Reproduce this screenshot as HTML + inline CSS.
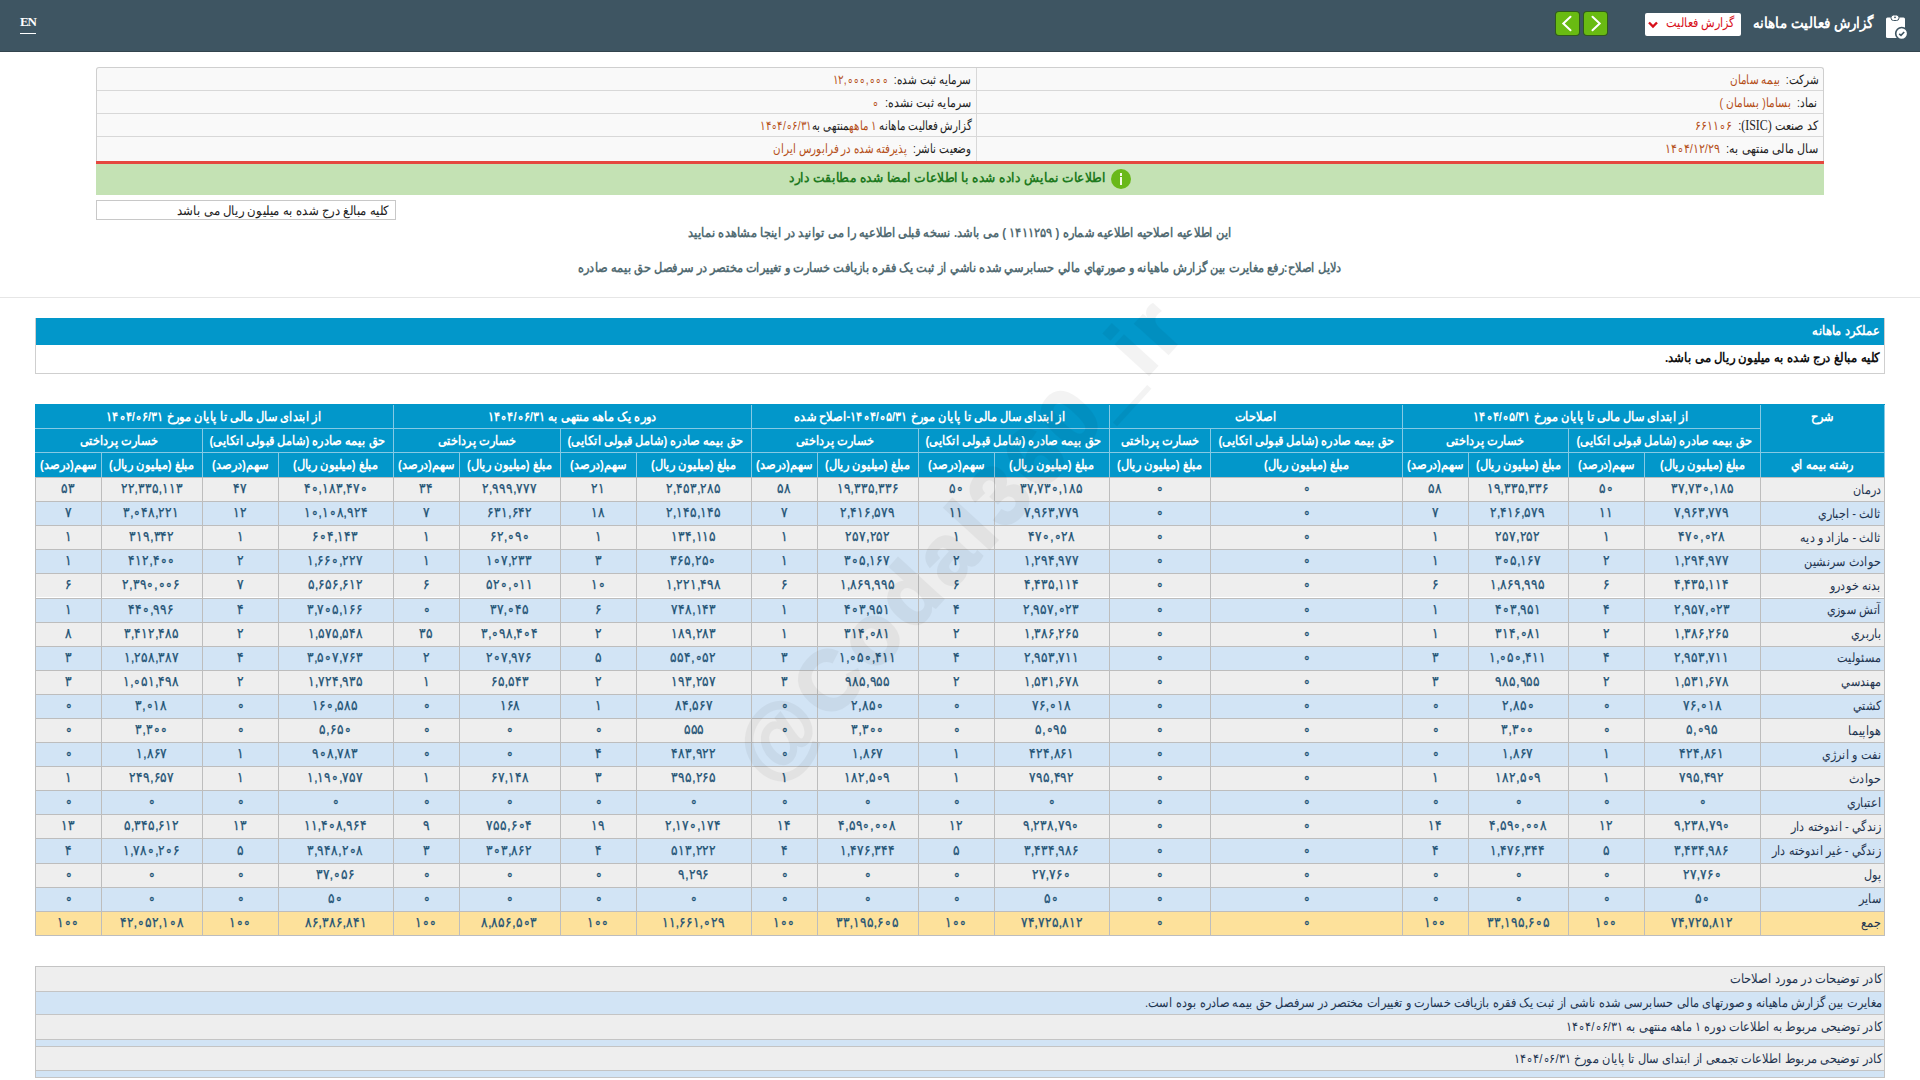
<!DOCTYPE html>
<html lang="fa" dir="rtl">
<head>
<meta charset="utf-8">
<style>
*{box-sizing:border-box;margin:0;padding:0}
html,body{width:1920px;height:1080px;overflow:hidden;background:#fff;font-family:"Liberation Sans",sans-serif;font-size:12px;color:#222}
.abs{position:absolute}
.sx{display:inline-block;white-space:nowrap}
#hdr{left:0;top:0;width:1920px;height:52px;background:#3e5562;border-bottom:1px solid #33444d}
#en{left:20px;top:14px;color:#fff;font-family:"Liberation Serif",serif;font-size:13px;font-weight:bold;direction:ltr;line-height:16px;letter-spacing:-1.2px}
#en:after{content:"";position:absolute;left:0;width:16px;top:19px;height:1px;background:#fff}
#ttl{left:1753px;top:13px;width:120px;height:20px;color:#fff;font-size:15px;font-weight:bold;white-space:nowrap;line-height:20px}
#ttl .sx{transform-origin:100% 50%;position:absolute;right:0}
#dd{left:1645px;top:13px;width:96px;height:23px;background:#fff;border-radius:2px}
#dd .t{position:absolute;right:6px;top:2px;color:#d8101a;font-size:13px;line-height:16px;transform:scaleX(.867);transform-origin:100% 50%;white-space:nowrap}
#dd svg{position:absolute;left:2px;top:8px}
.gbtn{top:12px;width:23px;height:23px;background:#69bb12;border-radius:3px;box-shadow:0 0 0 1px #2f5a1c}
.gbtn svg{position:absolute;left:0;top:0}
#info{left:96px;top:67px;width:1728px;height:94px;border:1px solid #cfcfcf;border-bottom:none;border-radius:3px 3px 0 0;background:#f9f9f9}
#info .row{height:23px;border-bottom:1px solid #d8d8d8;position:relative}
#info .row.last{height:24px;border-bottom:none}
#info .c{position:absolute;top:0;height:100%;white-space:nowrap;font-size:13px;padding-top:4px;transform-origin:100% 50%}
#info .r{right:5px}
#info .l{right:852px}
#info .div{position:absolute;left:879px;top:0;bottom:0;width:1px;background:#d8d8d8}
.v{color:#b5501a}
.ser{font-family:"Liberation Serif",serif;font-size:14px}
#red{left:96px;top:161px;width:1728px;height:3px;background:#e5473f}
#green{left:96px;top:164px;width:1728px;height:31px;background:#c4e2b4}
#green .t{position:absolute;right:718px;top:6px;color:#1f7a1f;font-size:13px;font-weight:bold;white-space:nowrap;transform:scaleX(.942);transform-origin:100% 50%}
#green .ic{position:absolute;left:1015px;top:5px;width:20px;height:20px;border-radius:50%;background:#69b81a}
#note{left:96px;top:200px;width:300px;height:20px;border:1px solid #c8c8c8;background:#fff;font-size:13px;padding-right:6px;padding-top:2px;white-space:nowrap}
.ctr{left:0;width:1920px;text-align:center;color:#536c73;font-weight:bold;font-size:13px;white-space:nowrap}
#hr{left:0;top:297px;width:1920px;height:1px;background:#e6e6e6}
#sec{left:35px;top:318px;width:1850px;height:56px;border:1px solid #cfcfcf;border-top:none}
#sechd{height:27px;background:#0297ca;color:#fff;font-weight:bold;font-size:13px;padding:5px 4px 0 0}
#secbd{font-weight:bold;font-size:13px;padding:5px 4px 0 0;color:#111}
#sec .sx{transform-origin:100% 50%}
.hbg{position:absolute;background:#0297ca}
.hc{position:absolute;color:#fff;font-weight:bold;font-size:13px;text-align:center;white-space:nowrap;display:flex;align-items:center;justify-content:center}
.hc .sx{transform:scaleX(.87)}
.ev{position:absolute;background:#eeeeee}
.od{position:absolute;background:#d2e4f5}
.tot{position:absolute;background:#fde19b}
.dc{position:absolute;color:#1d5274;font-size:13.5px;font-weight:normal;-webkit-text-stroke:.3px #1d5274;text-align:center;white-space:nowrap;display:flex;align-items:center;justify-content:center;padding-bottom:2px}
.dc .sx{transform:scaleX(.87);unicode-bidi:bidi-override;direction:ltr}
.dc.nm .sx{unicode-bidi:normal;direction:rtl}
.n{unicode-bidi:bidi-override;direction:ltr}
.dc.nm{justify-content:flex-start;padding-right:3px;color:#1f3550;font-weight:normal;font-size:13px;-webkit-text-stroke:0;padding-bottom:0}
.dc.nm .sx{transform:scaleX(.87);transform-origin:100% 50%}
#bot{left:35px;top:966px;width:1850px;height:112px;border:1px solid #c4c4c4;border-bottom:none}
#bot .br{position:relative;border-bottom:1px solid #c4c4c4;white-space:nowrap;padding-right:2px;font-size:13px;color:#1f3550}
#bot .sx{transform-origin:100% 50%}
#bot .g{background:#eeeeee}
#bot .b{background:#d2e4f5}
#wm{left:959px;top:539px;width:0;height:0}
#wm .t{position:absolute;left:-330px;top:-60px;width:660px;text-align:center;font-size:84px;line-height:120px;font-weight:bold;letter-spacing:5.2px;color:#000;-webkit-text-stroke:2.5px #000;opacity:.045;transform:rotate(-47.5deg);direction:ltr;white-space:nowrap}
</style>
</head>
<body>
<div id="hdr" class="abs"></div>
<div id="en" class="abs">EN</div>
<div id="ttl" class="abs"><span class="sx" style="transform:scaleX(.893)">گزارش فعالیت ماهانه</span></div>
<svg class="abs" style="left:1880px;top:10px" width="32" height="32" viewBox="0 0 32 32">
 <rect x="6" y="7.5" width="19" height="20.5" rx="1.5" fill="#fff"/>
 <rect x="11" y="5" width="8" height="5.5" rx="2.5" fill="#fff" stroke="#3e5562" stroke-width="1"/>
 <circle cx="15" cy="7.3" r="0.9" fill="#3e5562"/>
 <circle cx="21.7" cy="23.5" r="6" fill="#fff" stroke="#3e5562" stroke-width="1.6"/>
 <path d="M19.2 23.8 L21 25.4 L24.2 22" fill="none" stroke="#3e5562" stroke-width="1.6"/>
</svg>
<div id="dd" class="abs"><span class="t">گزارش فعالیت</span><svg width="12" height="8" viewBox="0 0 12 8"><path d="M2 1.5 L6 5.5 L10 1.5" fill="none" stroke="#d8101a" stroke-width="2.4"/></svg></div>
<div class="abs gbtn" style="left:1556px"><svg width="23" height="23" viewBox="0 0 23 23"><path d="M14.5 4.8 L7.3 11.5 L14.5 18.2" fill="none" stroke="#fff" stroke-width="2" stroke-linecap="round"/></svg></div>
<div class="abs gbtn" style="left:1584px"><svg width="23" height="23" viewBox="0 0 23 23"><path d="M8.5 4.8 L15.7 11.5 L8.5 18.2" fill="none" stroke="#fff" stroke-width="2" stroke-linecap="round"/></svg></div>

<div id="info" class="abs">
 <div class="div"></div>
 <div class="row"><span class="c r" style="transform:scaleX(.801)">شرکت:&nbsp; <span class="v">بیمه سامان</span></span><span class="c l" style="transform:scaleX(.799)">سرمایه ثبت شده:&nbsp; <span class="v"><span class="n">۱۲,∘∘∘,∘∘∘</span></span></span></div>
 <div class="row"><span class="c r" style="transform:scaleX(.816)">نماد:&nbsp; <span class="v">بساما( بسامان )</span></span><span class="c l" style="transform:scaleX(.846)">سرمایه ثبت نشده:&nbsp; <span class="v"><span class="n">∘</span></span></span></div>
 <div class="row"><span class="c r" style="transform:scaleX(.851)">کد صنعت <span class="ser">(ISIC)</span>:&nbsp; <span class="v"><span class="n">۶۶۱۱∘۶</span></span></span><span class="c l" style="transform:scaleX(.789)">گزارش فعالیت ماهانه <span class="v"><span class="n">۱</span> ماهه</span>منتهی به<span class="v"><span class="n">۱۴∘۴/∘۶/۳۱</span></span></span></div>
 <div class="row last"><span class="c r" style="transform:scaleX(.855)">سال مالی منتهی به:&nbsp; <span class="v"><span class="n">۱۴∘۴/۱۲/۲۹</span></span></span><span class="c l" style="transform:scaleX(.792)">وضعیت ناشر:&nbsp; <span class="v">پذیرفته شده در فرابورس ایران</span></span></div>
</div>
<div id="red" class="abs"></div>
<div id="green" class="abs"><div class="ic"><span style="position:absolute;left:9px;top:8px;width:2px;height:8px;background:#f4fbe8"></span><span style="position:absolute;left:9px;top:4px;width:2px;height:3px;background:#f4fbe8"></span></div><span class="t">اطلاعات نمایش داده شده با اطلاعات امضا شده مطابقت دارد</span></div>
<div id="note" class="abs"><span class="sx" style="transform:scaleX(.902);transform-origin:100% 50%">کلیه مبالغ درج شده به میلیون ریال می باشد</span></div>
<div class="abs ctr" style="top:225px"><span class="sx" style="transform:scaleX(.880)">این اطلاعیه اصلاحیه اطلاعیه شماره ( <span class="n">۱۴۱۱۲۵۹</span> ) می باشد. نسخه قبلی اطلاعیه را می توانید در اینجا مشاهده نمایید</span></div>
<div class="abs ctr" style="top:260px"><span class="sx" style="transform:scaleX(.877)">دلایل اصلاح:رفع مغایرت بین گزارش ماهیانه و صورتهاي مالي حسابرسي شده ناشي از ثبت یک فقره بازیافت خسارت و تغییرات مختصر در سرفصل حق بیمه صادره</span></div>
<div id="hr" class="abs"></div>
<div id="sec" class="abs"><div id="sechd"><span class="sx" style="transform:scaleX(.881)">عملکرد ماهانه</span></div><div id="secbd"><span class="sx" style="transform:scaleX(.901)">کلیه مبالغ درج شده به میلیون ریال می باشد.</span></div></div>
<div class="hbg" style="left:35px;top:404px;width:1850px;height:73px"></div>
<div class="ev" style="left:35px;top:477.0px;width:1850px;height:24.10px"></div>
<div class="od" style="left:35px;top:501.1px;width:1850px;height:24.10px"></div>
<div class="ev" style="left:35px;top:525.2px;width:1850px;height:24.10px"></div>
<div class="od" style="left:35px;top:549.3px;width:1850px;height:24.10px"></div>
<div class="ev" style="left:35px;top:573.4px;width:1850px;height:24.10px"></div>
<div class="od" style="left:35px;top:597.5px;width:1850px;height:24.10px"></div>
<div class="ev" style="left:35px;top:621.6px;width:1850px;height:24.10px"></div>
<div class="od" style="left:35px;top:645.7px;width:1850px;height:24.10px"></div>
<div class="ev" style="left:35px;top:669.8px;width:1850px;height:24.10px"></div>
<div class="od" style="left:35px;top:693.9px;width:1850px;height:24.10px"></div>
<div class="ev" style="left:35px;top:718.0px;width:1850px;height:24.10px"></div>
<div class="od" style="left:35px;top:742.1px;width:1850px;height:24.10px"></div>
<div class="ev" style="left:35px;top:766.2px;width:1850px;height:24.10px"></div>
<div class="od" style="left:35px;top:790.3px;width:1850px;height:24.10px"></div>
<div class="ev" style="left:35px;top:814.4px;width:1850px;height:24.10px"></div>
<div class="od" style="left:35px;top:838.5px;width:1850px;height:24.10px"></div>
<div class="ev" style="left:35px;top:862.6px;width:1850px;height:24.10px"></div>
<div class="od" style="left:35px;top:886.7px;width:1850px;height:24.10px"></div>
<div class="tot" style="left:35px;top:910.8px;width:1850px;height:24.10px"></div>
<div class="hc" style="left:1760px;top:405px;width:124px;height:23.5px;"><span class="sx">شرح</span></div>
<div class="hc" style="left:1402px;top:405px;width:358px;height:23.5px;"><span class="sx">از ابتدای سال مالی تا پایان مورخ <span class="n">۱۴∘۴/∘۵/۳۱</span></span></div>
<div class="hc" style="left:1109px;top:405px;width:293px;height:23.5px;"><span class="sx">اصلاحات</span></div>
<div class="hc" style="left:751px;top:405px;width:358px;height:23.5px;"><span class="sx">از ابتدای سال مالی تا پایان مورخ <span class="n">۱۴∘۴/∘۵/۳۱</span>-اصلاح شده</span></div>
<div class="hc" style="left:393px;top:405px;width:358px;height:23.5px;"><span class="sx">دوره یک ماهه منتهی به <span class="n">۱۴∘۴/∘۶/۳۱</span></span></div>
<div class="hc" style="left:35px;top:405px;width:358px;height:23.5px;"><span class="sx">از ابتدای سال مالی تا پایان مورخ <span class="n">۱۴∘۴/∘۶/۳۱</span></span></div>
<div class="hc" style="left:1568px;top:428.5px;width:192px;height:24.0px;"><span class="sx">حق بیمه صادره (شامل قبولی اتکایی)</span></div>
<div class="hc" style="left:1402px;top:428.5px;width:166px;height:24.0px;"><span class="sx">خسارت پرداختی</span></div>
<div class="hc" style="left:1210px;top:428.5px;width:192px;height:24.0px;"><span class="sx">حق بیمه صادره (شامل قبولی اتکایی)</span></div>
<div class="hc" style="left:1109px;top:428.5px;width:101px;height:24.0px;"><span class="sx">خسارت پرداختی</span></div>
<div class="hc" style="left:918px;top:428.5px;width:191px;height:24.0px;"><span class="sx">حق بیمه صادره (شامل قبولی اتکایی)</span></div>
<div class="hc" style="left:751px;top:428.5px;width:167px;height:24.0px;"><span class="sx">خسارت پرداختی</span></div>
<div class="hc" style="left:560px;top:428.5px;width:191px;height:24.0px;"><span class="sx">حق بیمه صادره (شامل قبولی اتکایی)</span></div>
<div class="hc" style="left:393px;top:428.5px;width:167px;height:24.0px;"><span class="sx">خسارت پرداختی</span></div>
<div class="hc" style="left:202px;top:428.5px;width:191px;height:24.0px;"><span class="sx">حق بیمه صادره (شامل قبولی اتکایی)</span></div>
<div class="hc" style="left:35px;top:428.5px;width:167px;height:24.0px;"><span class="sx">خسارت پرداختی</span></div>
<div class="hc" style="left:1760px;top:452.5px;width:124px;height:24.5px;"><span class="sx">رشته بیمه اي</span></div>
<div class="hc" style="left:1644px;top:452.5px;width:116px;height:24.5px;"><span class="sx">مبلغ (میلیون ریال)</span></div>
<div class="hc" style="left:1568px;top:452.5px;width:76px;height:24.5px;"><span class="sx">سهم(درصد)</span></div>
<div class="hc" style="left:1468px;top:452.5px;width:100px;height:24.5px;"><span class="sx">مبلغ (میلیون ریال)</span></div>
<div class="hc" style="left:1402px;top:452.5px;width:66px;height:24.5px;"><span class="sx">سهم(درصد)</span></div>
<div class="hc" style="left:1210px;top:452.5px;width:192px;height:24.5px;"><span class="sx">مبلغ (میلیون ریال)</span></div>
<div class="hc" style="left:1109px;top:452.5px;width:101px;height:24.5px;"><span class="sx">مبلغ (میلیون ریال)</span></div>
<div class="hc" style="left:994px;top:452.5px;width:115px;height:24.5px;"><span class="sx">مبلغ (میلیون ریال)</span></div>
<div class="hc" style="left:918px;top:452.5px;width:76px;height:24.5px;"><span class="sx">سهم(درصد)</span></div>
<div class="hc" style="left:817px;top:452.5px;width:101px;height:24.5px;"><span class="sx">مبلغ (میلیون ریال)</span></div>
<div class="hc" style="left:751px;top:452.5px;width:66px;height:24.5px;"><span class="sx">سهم(درصد)</span></div>
<div class="hc" style="left:636px;top:452.5px;width:115px;height:24.5px;"><span class="sx">مبلغ (میلیون ریال)</span></div>
<div class="hc" style="left:560px;top:452.5px;width:76px;height:24.5px;"><span class="sx">سهم(درصد)</span></div>
<div class="hc" style="left:459px;top:452.5px;width:101px;height:24.5px;"><span class="sx">مبلغ (میلیون ریال)</span></div>
<div class="hc" style="left:393px;top:452.5px;width:66px;height:24.5px;"><span class="sx">سهم(درصد)</span></div>
<div class="hc" style="left:278px;top:452.5px;width:115px;height:24.5px;"><span class="sx">مبلغ (میلیون ریال)</span></div>
<div class="hc" style="left:202px;top:452.5px;width:76px;height:24.5px;"><span class="sx">سهم(درصد)</span></div>
<div class="hc" style="left:101px;top:452.5px;width:101px;height:24.5px;"><span class="sx">مبلغ (میلیون ریال)</span></div>
<div class="hc" style="left:35px;top:452.5px;width:66px;height:24.5px;"><span class="sx">سهم(درصد)</span></div>
<div class="dc nm" style="left:1760px;top:477.0px;width:124px;height:24.100000000000023px;"><span class="sx">درمان</span></div>
<div class="dc" style="left:1644px;top:477.0px;width:116px;height:24.100000000000023px;"><span class="sx">۳۷,۷۳∘,۱۸۵</span></div>
<div class="dc" style="left:1568px;top:477.0px;width:76px;height:24.100000000000023px;"><span class="sx">۵∘</span></div>
<div class="dc" style="left:1468px;top:477.0px;width:100px;height:24.100000000000023px;"><span class="sx">۱۹,۳۳۵,۳۳۶</span></div>
<div class="dc" style="left:1402px;top:477.0px;width:66px;height:24.100000000000023px;"><span class="sx">۵۸</span></div>
<div class="dc" style="left:1210px;top:477.0px;width:192px;height:24.100000000000023px;"><span class="sx">∘</span></div>
<div class="dc" style="left:1109px;top:477.0px;width:101px;height:24.100000000000023px;"><span class="sx">∘</span></div>
<div class="dc" style="left:994px;top:477.0px;width:115px;height:24.100000000000023px;"><span class="sx">۳۷,۷۳∘,۱۸۵</span></div>
<div class="dc" style="left:918px;top:477.0px;width:76px;height:24.100000000000023px;"><span class="sx">۵∘</span></div>
<div class="dc" style="left:817px;top:477.0px;width:101px;height:24.100000000000023px;"><span class="sx">۱۹,۳۳۵,۳۳۶</span></div>
<div class="dc" style="left:751px;top:477.0px;width:66px;height:24.100000000000023px;"><span class="sx">۵۸</span></div>
<div class="dc" style="left:636px;top:477.0px;width:115px;height:24.100000000000023px;"><span class="sx">۲,۴۵۳,۲۸۵</span></div>
<div class="dc" style="left:560px;top:477.0px;width:76px;height:24.100000000000023px;"><span class="sx">۲۱</span></div>
<div class="dc" style="left:459px;top:477.0px;width:101px;height:24.100000000000023px;"><span class="sx">۲,۹۹۹,۷۷۷</span></div>
<div class="dc" style="left:393px;top:477.0px;width:66px;height:24.100000000000023px;"><span class="sx">۳۴</span></div>
<div class="dc" style="left:278px;top:477.0px;width:115px;height:24.100000000000023px;"><span class="sx">۴∘,۱۸۳,۴۷∘</span></div>
<div class="dc" style="left:202px;top:477.0px;width:76px;height:24.100000000000023px;"><span class="sx">۴۷</span></div>
<div class="dc" style="left:101px;top:477.0px;width:101px;height:24.100000000000023px;"><span class="sx">۲۲,۳۳۵,۱۱۳</span></div>
<div class="dc" style="left:35px;top:477.0px;width:66px;height:24.100000000000023px;"><span class="sx">۵۳</span></div>
<div class="dc nm" style="left:1760px;top:501.1px;width:124px;height:24.100000000000023px;"><span class="sx">ثالث - اجباري</span></div>
<div class="dc" style="left:1644px;top:501.1px;width:116px;height:24.100000000000023px;"><span class="sx">۷,۹۶۳,۷۷۹</span></div>
<div class="dc" style="left:1568px;top:501.1px;width:76px;height:24.100000000000023px;"><span class="sx">۱۱</span></div>
<div class="dc" style="left:1468px;top:501.1px;width:100px;height:24.100000000000023px;"><span class="sx">۲,۴۱۶,۵۷۹</span></div>
<div class="dc" style="left:1402px;top:501.1px;width:66px;height:24.100000000000023px;"><span class="sx">۷</span></div>
<div class="dc" style="left:1210px;top:501.1px;width:192px;height:24.100000000000023px;"><span class="sx">∘</span></div>
<div class="dc" style="left:1109px;top:501.1px;width:101px;height:24.100000000000023px;"><span class="sx">∘</span></div>
<div class="dc" style="left:994px;top:501.1px;width:115px;height:24.100000000000023px;"><span class="sx">۷,۹۶۳,۷۷۹</span></div>
<div class="dc" style="left:918px;top:501.1px;width:76px;height:24.100000000000023px;"><span class="sx">۱۱</span></div>
<div class="dc" style="left:817px;top:501.1px;width:101px;height:24.100000000000023px;"><span class="sx">۲,۴۱۶,۵۷۹</span></div>
<div class="dc" style="left:751px;top:501.1px;width:66px;height:24.100000000000023px;"><span class="sx">۷</span></div>
<div class="dc" style="left:636px;top:501.1px;width:115px;height:24.100000000000023px;"><span class="sx">۲,۱۴۵,۱۴۵</span></div>
<div class="dc" style="left:560px;top:501.1px;width:76px;height:24.100000000000023px;"><span class="sx">۱۸</span></div>
<div class="dc" style="left:459px;top:501.1px;width:101px;height:24.100000000000023px;"><span class="sx">۶۳۱,۶۴۲</span></div>
<div class="dc" style="left:393px;top:501.1px;width:66px;height:24.100000000000023px;"><span class="sx">۷</span></div>
<div class="dc" style="left:278px;top:501.1px;width:115px;height:24.100000000000023px;"><span class="sx">۱∘,۱∘۸,۹۲۴</span></div>
<div class="dc" style="left:202px;top:501.1px;width:76px;height:24.100000000000023px;"><span class="sx">۱۲</span></div>
<div class="dc" style="left:101px;top:501.1px;width:101px;height:24.100000000000023px;"><span class="sx">۳,∘۴۸,۲۲۱</span></div>
<div class="dc" style="left:35px;top:501.1px;width:66px;height:24.100000000000023px;"><span class="sx">۷</span></div>
<div class="dc nm" style="left:1760px;top:525.2px;width:124px;height:24.09999999999991px;"><span class="sx">ثالث - مازاد و دیه</span></div>
<div class="dc" style="left:1644px;top:525.2px;width:116px;height:24.09999999999991px;"><span class="sx">۴۷∘,∘۲۸</span></div>
<div class="dc" style="left:1568px;top:525.2px;width:76px;height:24.09999999999991px;"><span class="sx">۱</span></div>
<div class="dc" style="left:1468px;top:525.2px;width:100px;height:24.09999999999991px;"><span class="sx">۲۵۷,۲۵۲</span></div>
<div class="dc" style="left:1402px;top:525.2px;width:66px;height:24.09999999999991px;"><span class="sx">۱</span></div>
<div class="dc" style="left:1210px;top:525.2px;width:192px;height:24.09999999999991px;"><span class="sx">∘</span></div>
<div class="dc" style="left:1109px;top:525.2px;width:101px;height:24.09999999999991px;"><span class="sx">∘</span></div>
<div class="dc" style="left:994px;top:525.2px;width:115px;height:24.09999999999991px;"><span class="sx">۴۷∘,∘۲۸</span></div>
<div class="dc" style="left:918px;top:525.2px;width:76px;height:24.09999999999991px;"><span class="sx">۱</span></div>
<div class="dc" style="left:817px;top:525.2px;width:101px;height:24.09999999999991px;"><span class="sx">۲۵۷,۲۵۲</span></div>
<div class="dc" style="left:751px;top:525.2px;width:66px;height:24.09999999999991px;"><span class="sx">۱</span></div>
<div class="dc" style="left:636px;top:525.2px;width:115px;height:24.09999999999991px;"><span class="sx">۱۳۴,۱۱۵</span></div>
<div class="dc" style="left:560px;top:525.2px;width:76px;height:24.09999999999991px;"><span class="sx">۱</span></div>
<div class="dc" style="left:459px;top:525.2px;width:101px;height:24.09999999999991px;"><span class="sx">۶۲,∘۹∘</span></div>
<div class="dc" style="left:393px;top:525.2px;width:66px;height:24.09999999999991px;"><span class="sx">۱</span></div>
<div class="dc" style="left:278px;top:525.2px;width:115px;height:24.09999999999991px;"><span class="sx">۶∘۴,۱۴۳</span></div>
<div class="dc" style="left:202px;top:525.2px;width:76px;height:24.09999999999991px;"><span class="sx">۱</span></div>
<div class="dc" style="left:101px;top:525.2px;width:101px;height:24.09999999999991px;"><span class="sx">۳۱۹,۳۴۲</span></div>
<div class="dc" style="left:35px;top:525.2px;width:66px;height:24.09999999999991px;"><span class="sx">۱</span></div>
<div class="dc nm" style="left:1760px;top:549.3px;width:124px;height:24.100000000000023px;"><span class="sx">حوادث سرنشین</span></div>
<div class="dc" style="left:1644px;top:549.3px;width:116px;height:24.100000000000023px;"><span class="sx">۱,۲۹۴,۹۷۷</span></div>
<div class="dc" style="left:1568px;top:549.3px;width:76px;height:24.100000000000023px;"><span class="sx">۲</span></div>
<div class="dc" style="left:1468px;top:549.3px;width:100px;height:24.100000000000023px;"><span class="sx">۳∘۵,۱۶۷</span></div>
<div class="dc" style="left:1402px;top:549.3px;width:66px;height:24.100000000000023px;"><span class="sx">۱</span></div>
<div class="dc" style="left:1210px;top:549.3px;width:192px;height:24.100000000000023px;"><span class="sx">∘</span></div>
<div class="dc" style="left:1109px;top:549.3px;width:101px;height:24.100000000000023px;"><span class="sx">∘</span></div>
<div class="dc" style="left:994px;top:549.3px;width:115px;height:24.100000000000023px;"><span class="sx">۱,۲۹۴,۹۷۷</span></div>
<div class="dc" style="left:918px;top:549.3px;width:76px;height:24.100000000000023px;"><span class="sx">۲</span></div>
<div class="dc" style="left:817px;top:549.3px;width:101px;height:24.100000000000023px;"><span class="sx">۳∘۵,۱۶۷</span></div>
<div class="dc" style="left:751px;top:549.3px;width:66px;height:24.100000000000023px;"><span class="sx">۱</span></div>
<div class="dc" style="left:636px;top:549.3px;width:115px;height:24.100000000000023px;"><span class="sx">۳۶۵,۲۵∘</span></div>
<div class="dc" style="left:560px;top:549.3px;width:76px;height:24.100000000000023px;"><span class="sx">۳</span></div>
<div class="dc" style="left:459px;top:549.3px;width:101px;height:24.100000000000023px;"><span class="sx">۱∘۷,۲۳۳</span></div>
<div class="dc" style="left:393px;top:549.3px;width:66px;height:24.100000000000023px;"><span class="sx">۱</span></div>
<div class="dc" style="left:278px;top:549.3px;width:115px;height:24.100000000000023px;"><span class="sx">۱,۶۶∘,۲۲۷</span></div>
<div class="dc" style="left:202px;top:549.3px;width:76px;height:24.100000000000023px;"><span class="sx">۲</span></div>
<div class="dc" style="left:101px;top:549.3px;width:101px;height:24.100000000000023px;"><span class="sx">۴۱۲,۴∘∘</span></div>
<div class="dc" style="left:35px;top:549.3px;width:66px;height:24.100000000000023px;"><span class="sx">۱</span></div>
<div class="dc nm" style="left:1760px;top:573.4px;width:124px;height:24.100000000000023px;"><span class="sx">بدنه خودرو</span></div>
<div class="dc" style="left:1644px;top:573.4px;width:116px;height:24.100000000000023px;"><span class="sx">۴,۴۳۵,۱۱۴</span></div>
<div class="dc" style="left:1568px;top:573.4px;width:76px;height:24.100000000000023px;"><span class="sx">۶</span></div>
<div class="dc" style="left:1468px;top:573.4px;width:100px;height:24.100000000000023px;"><span class="sx">۱,۸۶۹,۹۹۵</span></div>
<div class="dc" style="left:1402px;top:573.4px;width:66px;height:24.100000000000023px;"><span class="sx">۶</span></div>
<div class="dc" style="left:1210px;top:573.4px;width:192px;height:24.100000000000023px;"><span class="sx">∘</span></div>
<div class="dc" style="left:1109px;top:573.4px;width:101px;height:24.100000000000023px;"><span class="sx">∘</span></div>
<div class="dc" style="left:994px;top:573.4px;width:115px;height:24.100000000000023px;"><span class="sx">۴,۴۳۵,۱۱۴</span></div>
<div class="dc" style="left:918px;top:573.4px;width:76px;height:24.100000000000023px;"><span class="sx">۶</span></div>
<div class="dc" style="left:817px;top:573.4px;width:101px;height:24.100000000000023px;"><span class="sx">۱,۸۶۹,۹۹۵</span></div>
<div class="dc" style="left:751px;top:573.4px;width:66px;height:24.100000000000023px;"><span class="sx">۶</span></div>
<div class="dc" style="left:636px;top:573.4px;width:115px;height:24.100000000000023px;"><span class="sx">۱,۲۲۱,۴۹۸</span></div>
<div class="dc" style="left:560px;top:573.4px;width:76px;height:24.100000000000023px;"><span class="sx">۱∘</span></div>
<div class="dc" style="left:459px;top:573.4px;width:101px;height:24.100000000000023px;"><span class="sx">۵۲∘,∘۱۱</span></div>
<div class="dc" style="left:393px;top:573.4px;width:66px;height:24.100000000000023px;"><span class="sx">۶</span></div>
<div class="dc" style="left:278px;top:573.4px;width:115px;height:24.100000000000023px;"><span class="sx">۵,۶۵۶,۶۱۲</span></div>
<div class="dc" style="left:202px;top:573.4px;width:76px;height:24.100000000000023px;"><span class="sx">۷</span></div>
<div class="dc" style="left:101px;top:573.4px;width:101px;height:24.100000000000023px;"><span class="sx">۲,۳۹∘,∘∘۶</span></div>
<div class="dc" style="left:35px;top:573.4px;width:66px;height:24.100000000000023px;"><span class="sx">۶</span></div>
<div class="dc nm" style="left:1760px;top:597.5px;width:124px;height:24.100000000000023px;"><span class="sx">آتش سوزي</span></div>
<div class="dc" style="left:1644px;top:597.5px;width:116px;height:24.100000000000023px;"><span class="sx">۲,۹۵۷,∘۲۳</span></div>
<div class="dc" style="left:1568px;top:597.5px;width:76px;height:24.100000000000023px;"><span class="sx">۴</span></div>
<div class="dc" style="left:1468px;top:597.5px;width:100px;height:24.100000000000023px;"><span class="sx">۴∘۳,۹۵۱</span></div>
<div class="dc" style="left:1402px;top:597.5px;width:66px;height:24.100000000000023px;"><span class="sx">۱</span></div>
<div class="dc" style="left:1210px;top:597.5px;width:192px;height:24.100000000000023px;"><span class="sx">∘</span></div>
<div class="dc" style="left:1109px;top:597.5px;width:101px;height:24.100000000000023px;"><span class="sx">∘</span></div>
<div class="dc" style="left:994px;top:597.5px;width:115px;height:24.100000000000023px;"><span class="sx">۲,۹۵۷,∘۲۳</span></div>
<div class="dc" style="left:918px;top:597.5px;width:76px;height:24.100000000000023px;"><span class="sx">۴</span></div>
<div class="dc" style="left:817px;top:597.5px;width:101px;height:24.100000000000023px;"><span class="sx">۴∘۳,۹۵۱</span></div>
<div class="dc" style="left:751px;top:597.5px;width:66px;height:24.100000000000023px;"><span class="sx">۱</span></div>
<div class="dc" style="left:636px;top:597.5px;width:115px;height:24.100000000000023px;"><span class="sx">۷۴۸,۱۴۳</span></div>
<div class="dc" style="left:560px;top:597.5px;width:76px;height:24.100000000000023px;"><span class="sx">۶</span></div>
<div class="dc" style="left:459px;top:597.5px;width:101px;height:24.100000000000023px;"><span class="sx">۳۷,∘۴۵</span></div>
<div class="dc" style="left:393px;top:597.5px;width:66px;height:24.100000000000023px;"><span class="sx">∘</span></div>
<div class="dc" style="left:278px;top:597.5px;width:115px;height:24.100000000000023px;"><span class="sx">۳,۷∘۵,۱۶۶</span></div>
<div class="dc" style="left:202px;top:597.5px;width:76px;height:24.100000000000023px;"><span class="sx">۴</span></div>
<div class="dc" style="left:101px;top:597.5px;width:101px;height:24.100000000000023px;"><span class="sx">۴۴∘,۹۹۶</span></div>
<div class="dc" style="left:35px;top:597.5px;width:66px;height:24.100000000000023px;"><span class="sx">۱</span></div>
<div class="dc nm" style="left:1760px;top:621.6px;width:124px;height:24.100000000000023px;"><span class="sx">باربري</span></div>
<div class="dc" style="left:1644px;top:621.6px;width:116px;height:24.100000000000023px;"><span class="sx">۱,۳۸۶,۲۶۵</span></div>
<div class="dc" style="left:1568px;top:621.6px;width:76px;height:24.100000000000023px;"><span class="sx">۲</span></div>
<div class="dc" style="left:1468px;top:621.6px;width:100px;height:24.100000000000023px;"><span class="sx">۳۱۴,∘۸۱</span></div>
<div class="dc" style="left:1402px;top:621.6px;width:66px;height:24.100000000000023px;"><span class="sx">۱</span></div>
<div class="dc" style="left:1210px;top:621.6px;width:192px;height:24.100000000000023px;"><span class="sx">∘</span></div>
<div class="dc" style="left:1109px;top:621.6px;width:101px;height:24.100000000000023px;"><span class="sx">∘</span></div>
<div class="dc" style="left:994px;top:621.6px;width:115px;height:24.100000000000023px;"><span class="sx">۱,۳۸۶,۲۶۵</span></div>
<div class="dc" style="left:918px;top:621.6px;width:76px;height:24.100000000000023px;"><span class="sx">۲</span></div>
<div class="dc" style="left:817px;top:621.6px;width:101px;height:24.100000000000023px;"><span class="sx">۳۱۴,∘۸۱</span></div>
<div class="dc" style="left:751px;top:621.6px;width:66px;height:24.100000000000023px;"><span class="sx">۱</span></div>
<div class="dc" style="left:636px;top:621.6px;width:115px;height:24.100000000000023px;"><span class="sx">۱۸۹,۲۸۳</span></div>
<div class="dc" style="left:560px;top:621.6px;width:76px;height:24.100000000000023px;"><span class="sx">۲</span></div>
<div class="dc" style="left:459px;top:621.6px;width:101px;height:24.100000000000023px;"><span class="sx">۳,∘۹۸,۴∘۴</span></div>
<div class="dc" style="left:393px;top:621.6px;width:66px;height:24.100000000000023px;"><span class="sx">۳۵</span></div>
<div class="dc" style="left:278px;top:621.6px;width:115px;height:24.100000000000023px;"><span class="sx">۱,۵۷۵,۵۴۸</span></div>
<div class="dc" style="left:202px;top:621.6px;width:76px;height:24.100000000000023px;"><span class="sx">۲</span></div>
<div class="dc" style="left:101px;top:621.6px;width:101px;height:24.100000000000023px;"><span class="sx">۳,۴۱۲,۴۸۵</span></div>
<div class="dc" style="left:35px;top:621.6px;width:66px;height:24.100000000000023px;"><span class="sx">۸</span></div>
<div class="dc nm" style="left:1760px;top:645.7px;width:124px;height:24.09999999999991px;"><span class="sx">مسئولیت</span></div>
<div class="dc" style="left:1644px;top:645.7px;width:116px;height:24.09999999999991px;"><span class="sx">۲,۹۵۳,۷۱۱</span></div>
<div class="dc" style="left:1568px;top:645.7px;width:76px;height:24.09999999999991px;"><span class="sx">۴</span></div>
<div class="dc" style="left:1468px;top:645.7px;width:100px;height:24.09999999999991px;"><span class="sx">۱,∘۵∘,۴۱۱</span></div>
<div class="dc" style="left:1402px;top:645.7px;width:66px;height:24.09999999999991px;"><span class="sx">۳</span></div>
<div class="dc" style="left:1210px;top:645.7px;width:192px;height:24.09999999999991px;"><span class="sx">∘</span></div>
<div class="dc" style="left:1109px;top:645.7px;width:101px;height:24.09999999999991px;"><span class="sx">∘</span></div>
<div class="dc" style="left:994px;top:645.7px;width:115px;height:24.09999999999991px;"><span class="sx">۲,۹۵۳,۷۱۱</span></div>
<div class="dc" style="left:918px;top:645.7px;width:76px;height:24.09999999999991px;"><span class="sx">۴</span></div>
<div class="dc" style="left:817px;top:645.7px;width:101px;height:24.09999999999991px;"><span class="sx">۱,∘۵∘,۴۱۱</span></div>
<div class="dc" style="left:751px;top:645.7px;width:66px;height:24.09999999999991px;"><span class="sx">۳</span></div>
<div class="dc" style="left:636px;top:645.7px;width:115px;height:24.09999999999991px;"><span class="sx">۵۵۴,∘۵۲</span></div>
<div class="dc" style="left:560px;top:645.7px;width:76px;height:24.09999999999991px;"><span class="sx">۵</span></div>
<div class="dc" style="left:459px;top:645.7px;width:101px;height:24.09999999999991px;"><span class="sx">۲∘۷,۹۷۶</span></div>
<div class="dc" style="left:393px;top:645.7px;width:66px;height:24.09999999999991px;"><span class="sx">۲</span></div>
<div class="dc" style="left:278px;top:645.7px;width:115px;height:24.09999999999991px;"><span class="sx">۳,۵∘۷,۷۶۳</span></div>
<div class="dc" style="left:202px;top:645.7px;width:76px;height:24.09999999999991px;"><span class="sx">۴</span></div>
<div class="dc" style="left:101px;top:645.7px;width:101px;height:24.09999999999991px;"><span class="sx">۱,۲۵۸,۳۸۷</span></div>
<div class="dc" style="left:35px;top:645.7px;width:66px;height:24.09999999999991px;"><span class="sx">۳</span></div>
<div class="dc nm" style="left:1760px;top:669.8px;width:124px;height:24.100000000000023px;"><span class="sx">مهندسي</span></div>
<div class="dc" style="left:1644px;top:669.8px;width:116px;height:24.100000000000023px;"><span class="sx">۱,۵۳۱,۶۷۸</span></div>
<div class="dc" style="left:1568px;top:669.8px;width:76px;height:24.100000000000023px;"><span class="sx">۲</span></div>
<div class="dc" style="left:1468px;top:669.8px;width:100px;height:24.100000000000023px;"><span class="sx">۹۸۵,۹۵۵</span></div>
<div class="dc" style="left:1402px;top:669.8px;width:66px;height:24.100000000000023px;"><span class="sx">۳</span></div>
<div class="dc" style="left:1210px;top:669.8px;width:192px;height:24.100000000000023px;"><span class="sx">∘</span></div>
<div class="dc" style="left:1109px;top:669.8px;width:101px;height:24.100000000000023px;"><span class="sx">∘</span></div>
<div class="dc" style="left:994px;top:669.8px;width:115px;height:24.100000000000023px;"><span class="sx">۱,۵۳۱,۶۷۸</span></div>
<div class="dc" style="left:918px;top:669.8px;width:76px;height:24.100000000000023px;"><span class="sx">۲</span></div>
<div class="dc" style="left:817px;top:669.8px;width:101px;height:24.100000000000023px;"><span class="sx">۹۸۵,۹۵۵</span></div>
<div class="dc" style="left:751px;top:669.8px;width:66px;height:24.100000000000023px;"><span class="sx">۳</span></div>
<div class="dc" style="left:636px;top:669.8px;width:115px;height:24.100000000000023px;"><span class="sx">۱۹۳,۲۵۷</span></div>
<div class="dc" style="left:560px;top:669.8px;width:76px;height:24.100000000000023px;"><span class="sx">۲</span></div>
<div class="dc" style="left:459px;top:669.8px;width:101px;height:24.100000000000023px;"><span class="sx">۶۵,۵۴۳</span></div>
<div class="dc" style="left:393px;top:669.8px;width:66px;height:24.100000000000023px;"><span class="sx">۱</span></div>
<div class="dc" style="left:278px;top:669.8px;width:115px;height:24.100000000000023px;"><span class="sx">۱,۷۲۴,۹۳۵</span></div>
<div class="dc" style="left:202px;top:669.8px;width:76px;height:24.100000000000023px;"><span class="sx">۲</span></div>
<div class="dc" style="left:101px;top:669.8px;width:101px;height:24.100000000000023px;"><span class="sx">۱,∘۵۱,۴۹۸</span></div>
<div class="dc" style="left:35px;top:669.8px;width:66px;height:24.100000000000023px;"><span class="sx">۳</span></div>
<div class="dc nm" style="left:1760px;top:693.9px;width:124px;height:24.100000000000023px;"><span class="sx">کشتي</span></div>
<div class="dc" style="left:1644px;top:693.9px;width:116px;height:24.100000000000023px;"><span class="sx">۷۶,∘۱۸</span></div>
<div class="dc" style="left:1568px;top:693.9px;width:76px;height:24.100000000000023px;"><span class="sx">∘</span></div>
<div class="dc" style="left:1468px;top:693.9px;width:100px;height:24.100000000000023px;"><span class="sx">۲,۸۵∘</span></div>
<div class="dc" style="left:1402px;top:693.9px;width:66px;height:24.100000000000023px;"><span class="sx">∘</span></div>
<div class="dc" style="left:1210px;top:693.9px;width:192px;height:24.100000000000023px;"><span class="sx">∘</span></div>
<div class="dc" style="left:1109px;top:693.9px;width:101px;height:24.100000000000023px;"><span class="sx">∘</span></div>
<div class="dc" style="left:994px;top:693.9px;width:115px;height:24.100000000000023px;"><span class="sx">۷۶,∘۱۸</span></div>
<div class="dc" style="left:918px;top:693.9px;width:76px;height:24.100000000000023px;"><span class="sx">∘</span></div>
<div class="dc" style="left:817px;top:693.9px;width:101px;height:24.100000000000023px;"><span class="sx">۲,۸۵∘</span></div>
<div class="dc" style="left:751px;top:693.9px;width:66px;height:24.100000000000023px;"><span class="sx">∘</span></div>
<div class="dc" style="left:636px;top:693.9px;width:115px;height:24.100000000000023px;"><span class="sx">۸۴,۵۶۷</span></div>
<div class="dc" style="left:560px;top:693.9px;width:76px;height:24.100000000000023px;"><span class="sx">۱</span></div>
<div class="dc" style="left:459px;top:693.9px;width:101px;height:24.100000000000023px;"><span class="sx">۱۶۸</span></div>
<div class="dc" style="left:393px;top:693.9px;width:66px;height:24.100000000000023px;"><span class="sx">∘</span></div>
<div class="dc" style="left:278px;top:693.9px;width:115px;height:24.100000000000023px;"><span class="sx">۱۶∘,۵۸۵</span></div>
<div class="dc" style="left:202px;top:693.9px;width:76px;height:24.100000000000023px;"><span class="sx">∘</span></div>
<div class="dc" style="left:101px;top:693.9px;width:101px;height:24.100000000000023px;"><span class="sx">۳,∘۱۸</span></div>
<div class="dc" style="left:35px;top:693.9px;width:66px;height:24.100000000000023px;"><span class="sx">∘</span></div>
<div class="dc nm" style="left:1760px;top:718.0px;width:124px;height:24.100000000000023px;"><span class="sx">هواپیما</span></div>
<div class="dc" style="left:1644px;top:718.0px;width:116px;height:24.100000000000023px;"><span class="sx">۵,∘۹۵</span></div>
<div class="dc" style="left:1568px;top:718.0px;width:76px;height:24.100000000000023px;"><span class="sx">∘</span></div>
<div class="dc" style="left:1468px;top:718.0px;width:100px;height:24.100000000000023px;"><span class="sx">۳,۳∘∘</span></div>
<div class="dc" style="left:1402px;top:718.0px;width:66px;height:24.100000000000023px;"><span class="sx">∘</span></div>
<div class="dc" style="left:1210px;top:718.0px;width:192px;height:24.100000000000023px;"><span class="sx">∘</span></div>
<div class="dc" style="left:1109px;top:718.0px;width:101px;height:24.100000000000023px;"><span class="sx">∘</span></div>
<div class="dc" style="left:994px;top:718.0px;width:115px;height:24.100000000000023px;"><span class="sx">۵,∘۹۵</span></div>
<div class="dc" style="left:918px;top:718.0px;width:76px;height:24.100000000000023px;"><span class="sx">∘</span></div>
<div class="dc" style="left:817px;top:718.0px;width:101px;height:24.100000000000023px;"><span class="sx">۳,۳∘∘</span></div>
<div class="dc" style="left:751px;top:718.0px;width:66px;height:24.100000000000023px;"><span class="sx">∘</span></div>
<div class="dc" style="left:636px;top:718.0px;width:115px;height:24.100000000000023px;"><span class="sx">۵۵۵</span></div>
<div class="dc" style="left:560px;top:718.0px;width:76px;height:24.100000000000023px;"><span class="sx">∘</span></div>
<div class="dc" style="left:459px;top:718.0px;width:101px;height:24.100000000000023px;"><span class="sx">∘</span></div>
<div class="dc" style="left:393px;top:718.0px;width:66px;height:24.100000000000023px;"><span class="sx">∘</span></div>
<div class="dc" style="left:278px;top:718.0px;width:115px;height:24.100000000000023px;"><span class="sx">۵,۶۵∘</span></div>
<div class="dc" style="left:202px;top:718.0px;width:76px;height:24.100000000000023px;"><span class="sx">∘</span></div>
<div class="dc" style="left:101px;top:718.0px;width:101px;height:24.100000000000023px;"><span class="sx">۳,۳∘∘</span></div>
<div class="dc" style="left:35px;top:718.0px;width:66px;height:24.100000000000023px;"><span class="sx">∘</span></div>
<div class="dc nm" style="left:1760px;top:742.1px;width:124px;height:24.100000000000023px;"><span class="sx">نفت و انرژي</span></div>
<div class="dc" style="left:1644px;top:742.1px;width:116px;height:24.100000000000023px;"><span class="sx">۴۲۴,۸۶۱</span></div>
<div class="dc" style="left:1568px;top:742.1px;width:76px;height:24.100000000000023px;"><span class="sx">۱</span></div>
<div class="dc" style="left:1468px;top:742.1px;width:100px;height:24.100000000000023px;"><span class="sx">۱,۸۶۷</span></div>
<div class="dc" style="left:1402px;top:742.1px;width:66px;height:24.100000000000023px;"><span class="sx">∘</span></div>
<div class="dc" style="left:1210px;top:742.1px;width:192px;height:24.100000000000023px;"><span class="sx">∘</span></div>
<div class="dc" style="left:1109px;top:742.1px;width:101px;height:24.100000000000023px;"><span class="sx">∘</span></div>
<div class="dc" style="left:994px;top:742.1px;width:115px;height:24.100000000000023px;"><span class="sx">۴۲۴,۸۶۱</span></div>
<div class="dc" style="left:918px;top:742.1px;width:76px;height:24.100000000000023px;"><span class="sx">۱</span></div>
<div class="dc" style="left:817px;top:742.1px;width:101px;height:24.100000000000023px;"><span class="sx">۱,۸۶۷</span></div>
<div class="dc" style="left:751px;top:742.1px;width:66px;height:24.100000000000023px;"><span class="sx">∘</span></div>
<div class="dc" style="left:636px;top:742.1px;width:115px;height:24.100000000000023px;"><span class="sx">۴۸۳,۹۲۲</span></div>
<div class="dc" style="left:560px;top:742.1px;width:76px;height:24.100000000000023px;"><span class="sx">۴</span></div>
<div class="dc" style="left:459px;top:742.1px;width:101px;height:24.100000000000023px;"><span class="sx">∘</span></div>
<div class="dc" style="left:393px;top:742.1px;width:66px;height:24.100000000000023px;"><span class="sx">∘</span></div>
<div class="dc" style="left:278px;top:742.1px;width:115px;height:24.100000000000023px;"><span class="sx">۹∘۸,۷۸۳</span></div>
<div class="dc" style="left:202px;top:742.1px;width:76px;height:24.100000000000023px;"><span class="sx">۱</span></div>
<div class="dc" style="left:101px;top:742.1px;width:101px;height:24.100000000000023px;"><span class="sx">۱,۸۶۷</span></div>
<div class="dc" style="left:35px;top:742.1px;width:66px;height:24.100000000000023px;"><span class="sx">∘</span></div>
<div class="dc nm" style="left:1760px;top:766.2px;width:124px;height:24.09999999999991px;"><span class="sx">حوادث</span></div>
<div class="dc" style="left:1644px;top:766.2px;width:116px;height:24.09999999999991px;"><span class="sx">۷۹۵,۴۹۲</span></div>
<div class="dc" style="left:1568px;top:766.2px;width:76px;height:24.09999999999991px;"><span class="sx">۱</span></div>
<div class="dc" style="left:1468px;top:766.2px;width:100px;height:24.09999999999991px;"><span class="sx">۱۸۲,۵∘۹</span></div>
<div class="dc" style="left:1402px;top:766.2px;width:66px;height:24.09999999999991px;"><span class="sx">۱</span></div>
<div class="dc" style="left:1210px;top:766.2px;width:192px;height:24.09999999999991px;"><span class="sx">∘</span></div>
<div class="dc" style="left:1109px;top:766.2px;width:101px;height:24.09999999999991px;"><span class="sx">∘</span></div>
<div class="dc" style="left:994px;top:766.2px;width:115px;height:24.09999999999991px;"><span class="sx">۷۹۵,۴۹۲</span></div>
<div class="dc" style="left:918px;top:766.2px;width:76px;height:24.09999999999991px;"><span class="sx">۱</span></div>
<div class="dc" style="left:817px;top:766.2px;width:101px;height:24.09999999999991px;"><span class="sx">۱۸۲,۵∘۹</span></div>
<div class="dc" style="left:751px;top:766.2px;width:66px;height:24.09999999999991px;"><span class="sx">۱</span></div>
<div class="dc" style="left:636px;top:766.2px;width:115px;height:24.09999999999991px;"><span class="sx">۳۹۵,۲۶۵</span></div>
<div class="dc" style="left:560px;top:766.2px;width:76px;height:24.09999999999991px;"><span class="sx">۳</span></div>
<div class="dc" style="left:459px;top:766.2px;width:101px;height:24.09999999999991px;"><span class="sx">۶۷,۱۴۸</span></div>
<div class="dc" style="left:393px;top:766.2px;width:66px;height:24.09999999999991px;"><span class="sx">۱</span></div>
<div class="dc" style="left:278px;top:766.2px;width:115px;height:24.09999999999991px;"><span class="sx">۱,۱۹∘,۷۵۷</span></div>
<div class="dc" style="left:202px;top:766.2px;width:76px;height:24.09999999999991px;"><span class="sx">۱</span></div>
<div class="dc" style="left:101px;top:766.2px;width:101px;height:24.09999999999991px;"><span class="sx">۲۴۹,۶۵۷</span></div>
<div class="dc" style="left:35px;top:766.2px;width:66px;height:24.09999999999991px;"><span class="sx">۱</span></div>
<div class="dc nm" style="left:1760px;top:790.3px;width:124px;height:24.100000000000023px;"><span class="sx">اعتباري</span></div>
<div class="dc" style="left:1644px;top:790.3px;width:116px;height:24.100000000000023px;"><span class="sx">∘</span></div>
<div class="dc" style="left:1568px;top:790.3px;width:76px;height:24.100000000000023px;"><span class="sx">∘</span></div>
<div class="dc" style="left:1468px;top:790.3px;width:100px;height:24.100000000000023px;"><span class="sx">∘</span></div>
<div class="dc" style="left:1402px;top:790.3px;width:66px;height:24.100000000000023px;"><span class="sx">∘</span></div>
<div class="dc" style="left:1210px;top:790.3px;width:192px;height:24.100000000000023px;"><span class="sx">∘</span></div>
<div class="dc" style="left:1109px;top:790.3px;width:101px;height:24.100000000000023px;"><span class="sx">∘</span></div>
<div class="dc" style="left:994px;top:790.3px;width:115px;height:24.100000000000023px;"><span class="sx">∘</span></div>
<div class="dc" style="left:918px;top:790.3px;width:76px;height:24.100000000000023px;"><span class="sx">∘</span></div>
<div class="dc" style="left:817px;top:790.3px;width:101px;height:24.100000000000023px;"><span class="sx">∘</span></div>
<div class="dc" style="left:751px;top:790.3px;width:66px;height:24.100000000000023px;"><span class="sx">∘</span></div>
<div class="dc" style="left:636px;top:790.3px;width:115px;height:24.100000000000023px;"><span class="sx">∘</span></div>
<div class="dc" style="left:560px;top:790.3px;width:76px;height:24.100000000000023px;"><span class="sx">∘</span></div>
<div class="dc" style="left:459px;top:790.3px;width:101px;height:24.100000000000023px;"><span class="sx">∘</span></div>
<div class="dc" style="left:393px;top:790.3px;width:66px;height:24.100000000000023px;"><span class="sx">∘</span></div>
<div class="dc" style="left:278px;top:790.3px;width:115px;height:24.100000000000023px;"><span class="sx">∘</span></div>
<div class="dc" style="left:202px;top:790.3px;width:76px;height:24.100000000000023px;"><span class="sx">∘</span></div>
<div class="dc" style="left:101px;top:790.3px;width:101px;height:24.100000000000023px;"><span class="sx">∘</span></div>
<div class="dc" style="left:35px;top:790.3px;width:66px;height:24.100000000000023px;"><span class="sx">∘</span></div>
<div class="dc nm" style="left:1760px;top:814.4px;width:124px;height:24.100000000000023px;"><span class="sx">زندگي - اندوخته دار</span></div>
<div class="dc" style="left:1644px;top:814.4px;width:116px;height:24.100000000000023px;"><span class="sx">۹,۲۳۸,۷۹∘</span></div>
<div class="dc" style="left:1568px;top:814.4px;width:76px;height:24.100000000000023px;"><span class="sx">۱۲</span></div>
<div class="dc" style="left:1468px;top:814.4px;width:100px;height:24.100000000000023px;"><span class="sx">۴,۵۹∘,∘∘۸</span></div>
<div class="dc" style="left:1402px;top:814.4px;width:66px;height:24.100000000000023px;"><span class="sx">۱۴</span></div>
<div class="dc" style="left:1210px;top:814.4px;width:192px;height:24.100000000000023px;"><span class="sx">∘</span></div>
<div class="dc" style="left:1109px;top:814.4px;width:101px;height:24.100000000000023px;"><span class="sx">∘</span></div>
<div class="dc" style="left:994px;top:814.4px;width:115px;height:24.100000000000023px;"><span class="sx">۹,۲۳۸,۷۹∘</span></div>
<div class="dc" style="left:918px;top:814.4px;width:76px;height:24.100000000000023px;"><span class="sx">۱۲</span></div>
<div class="dc" style="left:817px;top:814.4px;width:101px;height:24.100000000000023px;"><span class="sx">۴,۵۹∘,∘∘۸</span></div>
<div class="dc" style="left:751px;top:814.4px;width:66px;height:24.100000000000023px;"><span class="sx">۱۴</span></div>
<div class="dc" style="left:636px;top:814.4px;width:115px;height:24.100000000000023px;"><span class="sx">۲,۱۷∘,۱۷۴</span></div>
<div class="dc" style="left:560px;top:814.4px;width:76px;height:24.100000000000023px;"><span class="sx">۱۹</span></div>
<div class="dc" style="left:459px;top:814.4px;width:101px;height:24.100000000000023px;"><span class="sx">۷۵۵,۶∘۴</span></div>
<div class="dc" style="left:393px;top:814.4px;width:66px;height:24.100000000000023px;"><span class="sx">۹</span></div>
<div class="dc" style="left:278px;top:814.4px;width:115px;height:24.100000000000023px;"><span class="sx">۱۱,۴∘۸,۹۶۴</span></div>
<div class="dc" style="left:202px;top:814.4px;width:76px;height:24.100000000000023px;"><span class="sx">۱۳</span></div>
<div class="dc" style="left:101px;top:814.4px;width:101px;height:24.100000000000023px;"><span class="sx">۵,۳۴۵,۶۱۲</span></div>
<div class="dc" style="left:35px;top:814.4px;width:66px;height:24.100000000000023px;"><span class="sx">۱۳</span></div>
<div class="dc nm" style="left:1760px;top:838.5px;width:124px;height:24.100000000000023px;"><span class="sx">زندگي - غیر اندوخته دار</span></div>
<div class="dc" style="left:1644px;top:838.5px;width:116px;height:24.100000000000023px;"><span class="sx">۳,۴۳۴,۹۸۶</span></div>
<div class="dc" style="left:1568px;top:838.5px;width:76px;height:24.100000000000023px;"><span class="sx">۵</span></div>
<div class="dc" style="left:1468px;top:838.5px;width:100px;height:24.100000000000023px;"><span class="sx">۱,۴۷۶,۳۴۴</span></div>
<div class="dc" style="left:1402px;top:838.5px;width:66px;height:24.100000000000023px;"><span class="sx">۴</span></div>
<div class="dc" style="left:1210px;top:838.5px;width:192px;height:24.100000000000023px;"><span class="sx">∘</span></div>
<div class="dc" style="left:1109px;top:838.5px;width:101px;height:24.100000000000023px;"><span class="sx">∘</span></div>
<div class="dc" style="left:994px;top:838.5px;width:115px;height:24.100000000000023px;"><span class="sx">۳,۴۳۴,۹۸۶</span></div>
<div class="dc" style="left:918px;top:838.5px;width:76px;height:24.100000000000023px;"><span class="sx">۵</span></div>
<div class="dc" style="left:817px;top:838.5px;width:101px;height:24.100000000000023px;"><span class="sx">۱,۴۷۶,۳۴۴</span></div>
<div class="dc" style="left:751px;top:838.5px;width:66px;height:24.100000000000023px;"><span class="sx">۴</span></div>
<div class="dc" style="left:636px;top:838.5px;width:115px;height:24.100000000000023px;"><span class="sx">۵۱۳,۲۲۲</span></div>
<div class="dc" style="left:560px;top:838.5px;width:76px;height:24.100000000000023px;"><span class="sx">۴</span></div>
<div class="dc" style="left:459px;top:838.5px;width:101px;height:24.100000000000023px;"><span class="sx">۳∘۳,۸۶۲</span></div>
<div class="dc" style="left:393px;top:838.5px;width:66px;height:24.100000000000023px;"><span class="sx">۳</span></div>
<div class="dc" style="left:278px;top:838.5px;width:115px;height:24.100000000000023px;"><span class="sx">۳,۹۴۸,۲∘۸</span></div>
<div class="dc" style="left:202px;top:838.5px;width:76px;height:24.100000000000023px;"><span class="sx">۵</span></div>
<div class="dc" style="left:101px;top:838.5px;width:101px;height:24.100000000000023px;"><span class="sx">۱,۷۸∘,۲∘۶</span></div>
<div class="dc" style="left:35px;top:838.5px;width:66px;height:24.100000000000023px;"><span class="sx">۴</span></div>
<div class="dc nm" style="left:1760px;top:862.6px;width:124px;height:24.100000000000023px;"><span class="sx">پول</span></div>
<div class="dc" style="left:1644px;top:862.6px;width:116px;height:24.100000000000023px;"><span class="sx">۲۷,۷۶∘</span></div>
<div class="dc" style="left:1568px;top:862.6px;width:76px;height:24.100000000000023px;"><span class="sx">∘</span></div>
<div class="dc" style="left:1468px;top:862.6px;width:100px;height:24.100000000000023px;"><span class="sx">∘</span></div>
<div class="dc" style="left:1402px;top:862.6px;width:66px;height:24.100000000000023px;"><span class="sx">∘</span></div>
<div class="dc" style="left:1210px;top:862.6px;width:192px;height:24.100000000000023px;"><span class="sx">∘</span></div>
<div class="dc" style="left:1109px;top:862.6px;width:101px;height:24.100000000000023px;"><span class="sx">∘</span></div>
<div class="dc" style="left:994px;top:862.6px;width:115px;height:24.100000000000023px;"><span class="sx">۲۷,۷۶∘</span></div>
<div class="dc" style="left:918px;top:862.6px;width:76px;height:24.100000000000023px;"><span class="sx">∘</span></div>
<div class="dc" style="left:817px;top:862.6px;width:101px;height:24.100000000000023px;"><span class="sx">∘</span></div>
<div class="dc" style="left:751px;top:862.6px;width:66px;height:24.100000000000023px;"><span class="sx">∘</span></div>
<div class="dc" style="left:636px;top:862.6px;width:115px;height:24.100000000000023px;"><span class="sx">۹,۲۹۶</span></div>
<div class="dc" style="left:560px;top:862.6px;width:76px;height:24.100000000000023px;"><span class="sx">∘</span></div>
<div class="dc" style="left:459px;top:862.6px;width:101px;height:24.100000000000023px;"><span class="sx">∘</span></div>
<div class="dc" style="left:393px;top:862.6px;width:66px;height:24.100000000000023px;"><span class="sx">∘</span></div>
<div class="dc" style="left:278px;top:862.6px;width:115px;height:24.100000000000023px;"><span class="sx">۳۷,∘۵۶</span></div>
<div class="dc" style="left:202px;top:862.6px;width:76px;height:24.100000000000023px;"><span class="sx">∘</span></div>
<div class="dc" style="left:101px;top:862.6px;width:101px;height:24.100000000000023px;"><span class="sx">∘</span></div>
<div class="dc" style="left:35px;top:862.6px;width:66px;height:24.100000000000023px;"><span class="sx">∘</span></div>
<div class="dc nm" style="left:1760px;top:886.7px;width:124px;height:24.09999999999991px;"><span class="sx">سایر</span></div>
<div class="dc" style="left:1644px;top:886.7px;width:116px;height:24.09999999999991px;"><span class="sx">۵∘</span></div>
<div class="dc" style="left:1568px;top:886.7px;width:76px;height:24.09999999999991px;"><span class="sx">∘</span></div>
<div class="dc" style="left:1468px;top:886.7px;width:100px;height:24.09999999999991px;"><span class="sx">∘</span></div>
<div class="dc" style="left:1402px;top:886.7px;width:66px;height:24.09999999999991px;"><span class="sx">∘</span></div>
<div class="dc" style="left:1210px;top:886.7px;width:192px;height:24.09999999999991px;"><span class="sx">∘</span></div>
<div class="dc" style="left:1109px;top:886.7px;width:101px;height:24.09999999999991px;"><span class="sx">∘</span></div>
<div class="dc" style="left:994px;top:886.7px;width:115px;height:24.09999999999991px;"><span class="sx">۵∘</span></div>
<div class="dc" style="left:918px;top:886.7px;width:76px;height:24.09999999999991px;"><span class="sx">∘</span></div>
<div class="dc" style="left:817px;top:886.7px;width:101px;height:24.09999999999991px;"><span class="sx">∘</span></div>
<div class="dc" style="left:751px;top:886.7px;width:66px;height:24.09999999999991px;"><span class="sx">∘</span></div>
<div class="dc" style="left:636px;top:886.7px;width:115px;height:24.09999999999991px;"><span class="sx">∘</span></div>
<div class="dc" style="left:560px;top:886.7px;width:76px;height:24.09999999999991px;"><span class="sx">∘</span></div>
<div class="dc" style="left:459px;top:886.7px;width:101px;height:24.09999999999991px;"><span class="sx">∘</span></div>
<div class="dc" style="left:393px;top:886.7px;width:66px;height:24.09999999999991px;"><span class="sx">∘</span></div>
<div class="dc" style="left:278px;top:886.7px;width:115px;height:24.09999999999991px;"><span class="sx">۵∘</span></div>
<div class="dc" style="left:202px;top:886.7px;width:76px;height:24.09999999999991px;"><span class="sx">∘</span></div>
<div class="dc" style="left:101px;top:886.7px;width:101px;height:24.09999999999991px;"><span class="sx">∘</span></div>
<div class="dc" style="left:35px;top:886.7px;width:66px;height:24.09999999999991px;"><span class="sx">∘</span></div>
<div class="dc nm" style="left:1760px;top:910.8px;width:124px;height:24.100000000000023px;"><span class="sx">جمع</span></div>
<div class="dc" style="left:1644px;top:910.8px;width:116px;height:24.100000000000023px;"><span class="sx">۷۴,۷۲۵,۸۱۲</span></div>
<div class="dc" style="left:1568px;top:910.8px;width:76px;height:24.100000000000023px;"><span class="sx">۱∘∘</span></div>
<div class="dc" style="left:1468px;top:910.8px;width:100px;height:24.100000000000023px;"><span class="sx">۳۳,۱۹۵,۶∘۵</span></div>
<div class="dc" style="left:1402px;top:910.8px;width:66px;height:24.100000000000023px;"><span class="sx">۱∘∘</span></div>
<div class="dc" style="left:1210px;top:910.8px;width:192px;height:24.100000000000023px;"><span class="sx">∘</span></div>
<div class="dc" style="left:1109px;top:910.8px;width:101px;height:24.100000000000023px;"><span class="sx">∘</span></div>
<div class="dc" style="left:994px;top:910.8px;width:115px;height:24.100000000000023px;"><span class="sx">۷۴,۷۲۵,۸۱۲</span></div>
<div class="dc" style="left:918px;top:910.8px;width:76px;height:24.100000000000023px;"><span class="sx">۱∘∘</span></div>
<div class="dc" style="left:817px;top:910.8px;width:101px;height:24.100000000000023px;"><span class="sx">۳۳,۱۹۵,۶∘۵</span></div>
<div class="dc" style="left:751px;top:910.8px;width:66px;height:24.100000000000023px;"><span class="sx">۱∘∘</span></div>
<div class="dc" style="left:636px;top:910.8px;width:115px;height:24.100000000000023px;"><span class="sx">۱۱,۶۶۱,∘۲۹</span></div>
<div class="dc" style="left:560px;top:910.8px;width:76px;height:24.100000000000023px;"><span class="sx">۱∘∘</span></div>
<div class="dc" style="left:459px;top:910.8px;width:101px;height:24.100000000000023px;"><span class="sx">۸,۸۵۶,۵∘۳</span></div>
<div class="dc" style="left:393px;top:910.8px;width:66px;height:24.100000000000023px;"><span class="sx">۱∘∘</span></div>
<div class="dc" style="left:278px;top:910.8px;width:115px;height:24.100000000000023px;"><span class="sx">۸۶,۳۸۶,۸۴۱</span></div>
<div class="dc" style="left:202px;top:910.8px;width:76px;height:24.100000000000023px;"><span class="sx">۱∘∘</span></div>
<div class="dc" style="left:101px;top:910.8px;width:101px;height:24.100000000000023px;"><span class="sx">۴۲,∘۵۲,۱∘۸</span></div>
<div class="dc" style="left:35px;top:910.8px;width:66px;height:24.100000000000023px;"><span class="sx">۱∘∘</span></div>
<svg class="abs" style="left:0;top:0" width="1920" height="1080" shape-rendering="crispEdges"><rect x="1884" y="405" width="1" height="72" fill="#86c9e4"/><rect x="1760" y="405" width="1" height="72" fill="#86c9e4"/><rect x="1402" y="405" width="1" height="72" fill="#86c9e4"/><rect x="1109" y="405" width="1" height="72" fill="#86c9e4"/><rect x="751" y="405" width="1" height="72" fill="#86c9e4"/><rect x="393" y="405" width="1" height="72" fill="#86c9e4"/><rect x="1568" y="429" width="1" height="48" fill="#86c9e4"/><rect x="1210" y="429" width="1" height="48" fill="#86c9e4"/><rect x="918" y="429" width="1" height="48" fill="#86c9e4"/><rect x="560" y="429" width="1" height="48" fill="#86c9e4"/><rect x="202" y="429" width="1" height="48" fill="#86c9e4"/><rect x="1644" y="453" width="1" height="24" fill="#86c9e4"/><rect x="1468" y="453" width="1" height="24" fill="#86c9e4"/><rect x="994" y="453" width="1" height="24" fill="#86c9e4"/><rect x="817" y="453" width="1" height="24" fill="#86c9e4"/><rect x="636" y="453" width="1" height="24" fill="#86c9e4"/><rect x="459" y="453" width="1" height="24" fill="#86c9e4"/><rect x="278" y="453" width="1" height="24" fill="#86c9e4"/><rect x="101" y="453" width="1" height="24" fill="#86c9e4"/><rect x="35" y="428" width="1725" height="1" fill="#86c9e4"/><rect x="35" y="452" width="1849" height="1" fill="#86c9e4"/><rect x="35" y="477" width="1" height="458" fill="#bdbdbd"/><rect x="101" y="477" width="1" height="458" fill="#bdbdbd"/><rect x="202" y="477" width="1" height="458" fill="#bdbdbd"/><rect x="278" y="477" width="1" height="458" fill="#bdbdbd"/><rect x="393" y="477" width="1" height="458" fill="#bdbdbd"/><rect x="459" y="477" width="1" height="458" fill="#bdbdbd"/><rect x="560" y="477" width="1" height="458" fill="#bdbdbd"/><rect x="636" y="477" width="1" height="458" fill="#bdbdbd"/><rect x="751" y="477" width="1" height="458" fill="#bdbdbd"/><rect x="817" y="477" width="1" height="458" fill="#bdbdbd"/><rect x="918" y="477" width="1" height="458" fill="#bdbdbd"/><rect x="994" y="477" width="1" height="458" fill="#bdbdbd"/><rect x="1109" y="477" width="1" height="458" fill="#bdbdbd"/><rect x="1210" y="477" width="1" height="458" fill="#bdbdbd"/><rect x="1402" y="477" width="1" height="458" fill="#bdbdbd"/><rect x="1468" y="477" width="1" height="458" fill="#bdbdbd"/><rect x="1568" y="477" width="1" height="458" fill="#bdbdbd"/><rect x="1644" y="477" width="1" height="458" fill="#bdbdbd"/><rect x="1760" y="477" width="1" height="458" fill="#bdbdbd"/><rect x="1884" y="477" width="1" height="458" fill="#bdbdbd"/><rect x="35" y="477" width="1850" height="1" fill="#bdbdbd"/><rect x="35" y="501" width="1850" height="1" fill="#bdbdbd"/><rect x="35" y="525" width="1850" height="1" fill="#bdbdbd"/><rect x="35" y="549" width="1850" height="1" fill="#bdbdbd"/><rect x="35" y="573" width="1850" height="1" fill="#bdbdbd"/><rect x="35" y="598" width="1850" height="1" fill="#bdbdbd"/><rect x="35" y="622" width="1850" height="1" fill="#bdbdbd"/><rect x="35" y="646" width="1850" height="1" fill="#bdbdbd"/><rect x="35" y="670" width="1850" height="1" fill="#bdbdbd"/><rect x="35" y="694" width="1850" height="1" fill="#bdbdbd"/><rect x="35" y="718" width="1850" height="1" fill="#bdbdbd"/><rect x="35" y="742" width="1850" height="1" fill="#bdbdbd"/><rect x="35" y="766" width="1850" height="1" fill="#bdbdbd"/><rect x="35" y="790" width="1850" height="1" fill="#bdbdbd"/><rect x="35" y="814" width="1850" height="1" fill="#bdbdbd"/><rect x="35" y="838" width="1850" height="1" fill="#bdbdbd"/><rect x="35" y="863" width="1850" height="1" fill="#bdbdbd"/><rect x="35" y="887" width="1850" height="1" fill="#bdbdbd"/><rect x="35" y="911" width="1850" height="1" fill="#bdbdbd"/><rect x="35" y="935" width="1850" height="1" fill="#bdbdbd"/></svg>
<div id="bot" class="abs">
 <div class="br g" style="height:24.6px;padding-top:4px"><span class="sx" style="transform:scaleX(.887)">کادر توضیحات در مورد اصلاحات</span></div>
 <div class="br b" style="height:23.7px;padding-top:3px"><span class="sx" style="transform:scaleX(.871)">مغایرت بین گزارش ماهیانه و صورتهای مالی حسابرسی شده ناشی از ثبت یک فقره بازیافت خسارت و تغییرات مختصر در سرفصل حق بیمه صادره بوده است.</span></div>
 <div class="br g" style="height:25px;padding-top:4px"><span class="sx" style="transform:scaleX(.872)">کادر توضیحی مربوط به اطلاعات دوره <span class="n">۱</span> ماهه منتهی به <span class="n">۱۴∘۴/∘۶/۳۱</span></span></div>
 <div class="br b" style="height:7px"></div>
 <div class="br g" style="height:24.1px;padding-top:4px"><span class="sx" style="transform:scaleX(.874)">کادر توضیحی مربوط اطلاعات تجمعی از ابتدای سال تا پایان مورخ <span class="n">۱۴∘۴/∘۶/۳۱</span></span></div>
 <div class="br b" style="height:7px"></div>
</div>
<div id="wm" class="abs"><div class="t">@Codal360_ir</div></div>
<script>
(function(){
 function fit(el, tw, origin){
  if(!el) return;
  var w = el.offsetWidth;
  if(!w) return;
  var s = tw / w;
  if(s < 0.5 || s > 1.5) return;
  el.style.transform = 'scaleX(' + s.toFixed(4) + ')';
 }
 function q(s,i){ return document.querySelectorAll(s)[i||0]; }
 try{
  fit(q('#ttl .sx'), 120);
  fit(q('#dd .t'), 69);
  var info=[88.5,138.5,98.5,99,122.5,211,153,198];
  for(var i=0;i<info.length;i++) fit(q('#info .c',i), info[i]);
  fit(q('#green .t'), 317);
  fit(q('#note .sx'), 212);
  fit(q('.ctr .sx',0), 544); fit(q('.ctr .sx',1), 764);
  fit(q('#sec .sx',0), 67.5); fit(q('#sec .sx',1), 215);
  var bot=[152,737,316,368];
  for(var i=0;i<bot.length;i++) fit(q('#bot .sx',i), bot[i]);
  function factor(sel, refs){
   var els=document.querySelectorAll(sel), sum=0, n=0;
   for(var i=0;i<els.length;i++){ var t=els[i].textContent; if(refs.hasOwnProperty(t)){ var w=els[i].offsetWidth; if(w){sum+=refs[t]/w;n++;} delete refs[t]; } }
   return n? sum/n : 0;
  }
  var hf = factor('.hc .sx', {"حق بیمه صادره (شامل قبولی اتکایی)":174,"مبلغ (میلیون ریال)":89,"سهم(درصد)":56,"خسارت پرداختی":76,"شرح":23,"رشته بیمه اي":63});
  var df = factor('.dc:not(.nm) .sx', {"۳۷,۷۳∘,۱۸۵":63.5});
  var nf = factor('.dc.nm .sx', {"درمان":27.6,"ثالث - مازاد و دیه":82,"زندگي - غیر اندوخته دار":111});
  function applyf(sel,f){ if(f<0.5||f>1.5) return; var els=document.querySelectorAll(sel); for(var i=0;i<els.length;i++) els[i].style.transform='scaleX('+f.toFixed(4)+')'; }
  applyf('.hc .sx', hf); applyf('.dc:not(.nm) .sx', df); applyf('.dc.nm .sx', nf);
 }catch(e){}
})();
</script>
</body>
</html>
